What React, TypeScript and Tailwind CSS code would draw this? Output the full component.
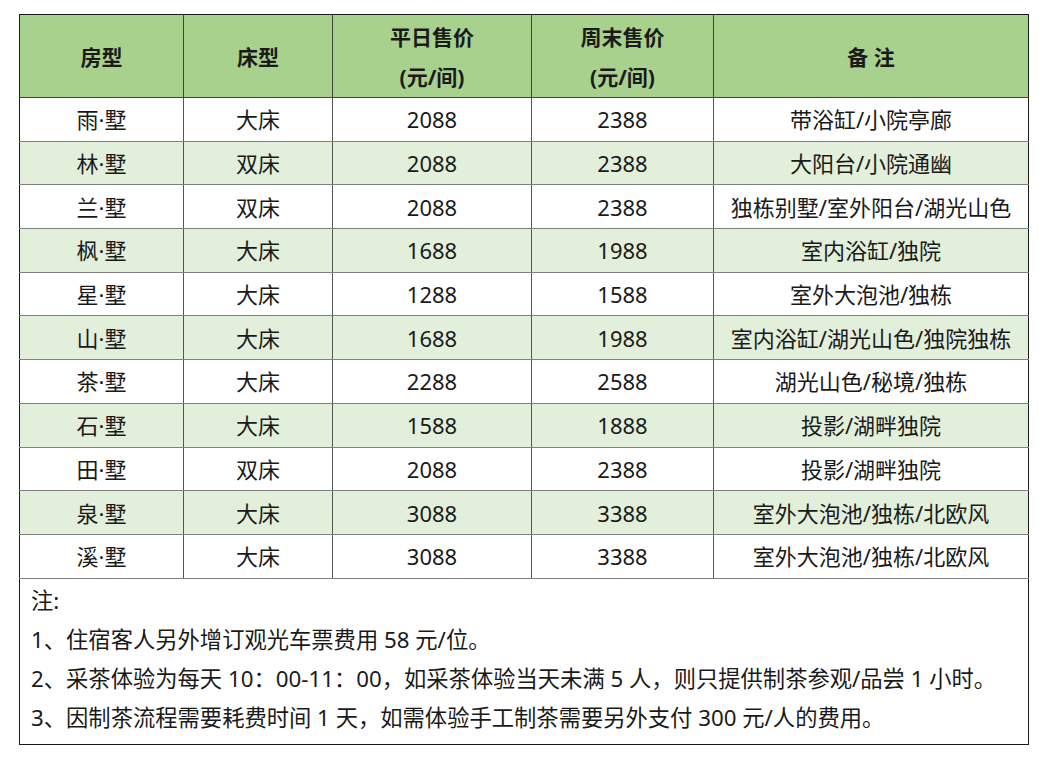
import React from 'react';

const rows = [
  ['雨·墅', '大床', '2088', '2388', '带浴缸/小院亭廊'],
  ['林·墅', '双床', '2088', '2388', '大阳台/小院通幽'],
  ['兰·墅', '双床', '2088', '2388', '独栋别墅/室外阳台/湖光山色'],
  ['枫·墅', '大床', '1688', '1988', '室内浴缸/独院'],
  ['星·墅', '大床', '1288', '1588', '室外大泡池/独栋'],
  ['山·墅', '大床', '1688', '1988', '室内浴缸/湖光山色/独院独栋'],
  ['茶·墅', '大床', '2288', '2588', '湖光山色/秘境/独栋'],
  ['石·墅', '大床', '1588', '1888', '投影/湖畔独院'],
  ['田·墅', '双床', '2088', '2388', '投影/湖畔独院'],
  ['泉·墅', '大床', '3088', '3388', '室外大泡池/独栋/北欧风'],
  ['溪·墅', '大床', '3088', '3388', '室外大泡池/独栋/北欧风'],
];

const notes = [
  '1、住宿客人另外增订观光车票费用 58 元/位。',
  '2、采茶体验为每天 10：00-11：00，如采茶体验当天未满 5 人，则只提供制茶参观/品尝 1 小时。',
  '3、因制茶流程需要耗费时间 1 天，如需体验手工制茶需要另外支付 300 元/人的费用。',
];

const App = () => {
  return (
    <div
      className="w-[1053px] h-[770px] bg-white pt-[14px] pl-[19px] text-[#1a1a1a]"
      style={{ fontFamily: '"Noto Sans", "Noto Sans CJK SC", sans-serif' }}
    >
      <table className="w-[1009px] border-collapse table-fixed border border-[#1a1a1a]">
        <colgroup>
          <col className="w-[164px]" />
          <col className="w-[149px]" />
          <col className="w-[199px]" />
          <col className="w-[182px]" />
          <col className="w-[315px]" />
        </colgroup>
        <thead>
          <tr className="h-[83px] bg-[#a9d18e] text-[21px] font-bold leading-[40px]">
            <th className="border-r border-b border-[#3d4a35] pt-[2px]">房型</th>
            <th className="border-r border-b border-[#3d4a35] pt-[2px]">床型</th>
            <th className="border-r border-b border-[#3d4a35] pt-[2px]">
              平日售价
              <br />
              (元/间)
            </th>
            <th className="border-r border-b border-[#3d4a35] pt-[2px]">
              周末售价
              <br />
              (元/间)
            </th>
            <th className="border-b border-[#3d4a35] pt-[2px]">备 注</th>
          </tr>
        </thead>
        <tbody className="text-[22px] text-center">
          {rows.map((r, i) => (
            <tr key={i} className={`h-[43.7px] ${i % 2 === 1 ? 'bg-[#e2efda]' : 'bg-white'}`}>
              {r.map((c, j) => (
                <td
                  key={j}
                  className={`border-b border-[#808080] ${j < 4 ? 'border-r border-r-[#555]' : ''} whitespace-nowrap p-0 leading-[30px]`}
                >
                  {c}
                </td>
              ))}
            </tr>
          ))}
          <tr>
            <td colSpan={5} className="text-left px-[11px] pt-[2px] pb-[7px] text-[22.3px] leading-[39px]">
              <div>注:</div>
              {notes.map((n, i) => (
                <div key={i} className="whitespace-nowrap">
                  {n}
                </div>
              ))}
            </td>
          </tr>
        </tbody>
      </table>
    </div>
  );
};

export default App;
